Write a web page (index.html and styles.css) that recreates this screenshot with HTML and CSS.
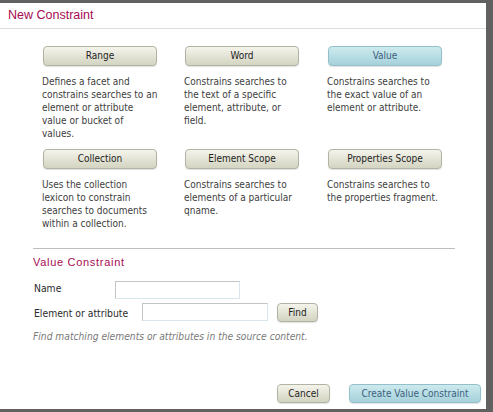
FILE: index.html
```html
<!DOCTYPE html>
<html>
<head>
<meta charset="utf-8">
<link rel="stylesheet" href="styles.css">
</head>
<body>
<div class="frame">
  <div class="dialog">
    <div class="header">New Constraint</div>
    <div class="content">
      <div class="grid">
        <div class="item">
          <div class="btn type">Range</div>
          <p class="desc">Defines a facet and<br>constrains searches to an<br>element or attribute<br>value or bucket of<br>values.</p>
        </div>
        <div class="item">
          <div class="btn type">Word</div>
          <p class="desc">Constrains searches to<br>the text of a specific<br>element, attribute, or<br>field.</p>
        </div>
        <div class="item">
          <div class="btn type active">Value</div>
          <p class="desc">Constrains searches to<br>the exact value of an<br>element or attribute.</p>
        </div>
        <div class="item">
          <div class="btn type">Collection</div>
          <p class="desc">Uses the collection<br>lexicon to constrain<br>searches to documents<br>within a collection.</p>
        </div>
        <div class="item">
          <div class="btn type">Element Scope</div>
          <p class="desc">Constrains searches to<br>elements of a particular<br>qname.</p>
        </div>
        <div class="item">
          <div class="btn type">Properties Scope</div>
          <p class="desc">Constrains searches to<br>the properties fragment.</p>
        </div>
      </div>
      <div class="section">
        <div class="section-title">Value Constraint</div>
        <div class="row row-name">
          <label class="label label-name">Name</label>
          <div class="input input-name"></div>
        </div>
        <div class="row row-elem">
          <label class="label label-elem">Element or attribute</label>
          <div class="input input-elem"></div>
          <div class="btn find">Find</div>
        </div>
        <div class="hint">Find matching elements or attributes in the source content.</div>
      </div>
    </div>
    <div class="footer">
      <div class="btn cancel">Cancel</div>
      <div class="btn active create">Create Value Constraint</div>
    </div>
  </div>
</div>
</body>
</html>
```

FILE: styles.css
```css
html, body {
  margin: 0;
  padding: 0;
}
body {
  width: 493px;
  height: 412px;
  overflow: hidden;
  background: #616161;
  font-family: "DejaVu Sans Condensed", "Liberation Sans", Arial, sans-serif;
}
.frame {
  padding: 3px 7px 3px 0;
  height: 406px;
}
.dialog {
  background: #fff;
  width: 486px;
  height: 406px;
  display: flex;
  flex-direction: column;
}
.header {
  height: 25px;
  line-height: 25px;
  border-bottom: 1px solid #dedede;
  padding-left: 8px;
  font-family: "Liberation Sans", Arial, sans-serif;
  font-size: 12.5px;
  color: #a50b52;
}
.content {
  padding: 17px 31px 0 33px;
}
.grid {
  display: grid;
  grid-template-columns: 142px 143px 142px;
  row-gap: 9px;
  margin-left: 10px;
}
.btn {
  box-sizing: border-box;
  height: 20px;
  line-height: 18px;
  text-align: center;
  font-size: 10px;
  color: #1e1e1e;
  border: 1px solid #b3b3a3;
  border-radius: 4px;
  background: linear-gradient(#f4f4ec, #e2e2d4 55%, #d4d4c2);
  box-shadow: 0 1px 1px rgba(0, 0, 0, 0.12);
}
.btn.active {
  color: #40607e;
  border-color: #94c0cb;
  background: linear-gradient(#cdeaee, #b6dde4 55%, #a6d0da);
}
.type {
  width: 114px;
}
.desc {
  margin: 9px 0 0 -1px;
  white-space: nowrap;
  font-size: 10px;
  line-height: 13px;
  color: #404040;
}
.section {
  border-top: 1px solid #bdbdbd;
  margin-top: 18px;
}
.section-title {
  margin-top: 6px;
  line-height: 14px;
  font-family: "Liberation Sans", Arial, sans-serif;
  font-size: 11px;
  letter-spacing: 0.7px;
  color: #a50b52;
}
.row {
  display: flex;
  align-items: flex-start;
}
.row-name {
  margin-top: 12px;
  height: 18px;
}
.row-elem {
  margin-top: 4px;
  height: 19px;
}
.label {
  font-size: 10.3px;
  color: #2a2a2a;
  margin-left: 1px;
}
.label-name {
  width: 81px;
  line-height: 14px;
}
.label-elem {
  width: 108px;
  line-height: 20px;
}
.input {
  box-sizing: border-box;
  height: 18px;
  border: 1px solid #c4c4c4;
  border-bottom-color: #d8e6ee;
  border-right-color: #d8e6ee;
  background: #fff;
}
.input-name {
  width: 125px;
}
.input-elem {
  width: 126px;
}
.find {
  width: 41px;
  height: 19px;
  line-height: 17px;
  margin-left: 9px;
}
.hint {
  margin-top: 9px;
  line-height: 12px;
  font-size: 10.2px;
  font-style: italic;
  color: #7a7a7a;
}
.footer {
  margin-top: auto;
  display: flex;
  justify-content: flex-end;
  gap: 19px;
  padding: 0 5px 6px 0;
}
.cancel {
  width: 53px;
  height: 19px;
  line-height: 17px;
}
.create {
  width: 132px;
  height: 19px;
  line-height: 17px;
}
```
